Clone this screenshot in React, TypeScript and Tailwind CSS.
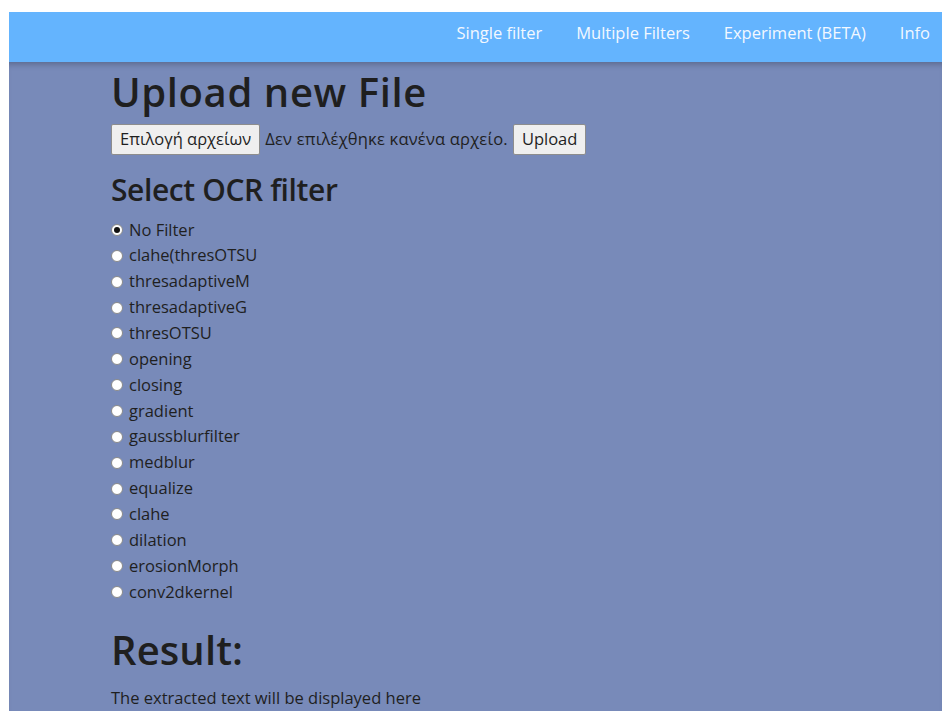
import { useState } from "react";

const filters = [
  "No Filter",
  "clahe(thresOTSU",
  "thresadaptiveM",
  "thresadaptiveG",
  "thresOTSU",
  "opening",
  "closing",
  "gradient",
  "gaussblurfilter",
  "medblur",
  "equalize",
  "clahe",
  "dilation",
  "erosionMorph",
  "conv2dkernel",
];

const links = ["Single filter", "Multiple Filters", "Experiment (BETA)", "Info"];

export default function App() {
  const [filter, setFilter] = useState("No Filter");

  return (
    <div className="min-h-screen bg-white pt-[12px] pl-[9px] font-['Open_Sans',sans-serif] text-[#1f1f1f]">
      <nav className="h-[50px] bg-[#64b4fe] flex items-center justify-end gap-[34px] pr-[12px] pb-[7px] relative z-10">
        {links.map((l) => (
          <a key={l} href="#" className="text-[16.5px] text-[#f3f8ff]">
            {l}
          </a>
        ))}
      </nav>

      <main className="bg-[#788ab9] min-h-[649px] pl-[102px] pt-[2px] shadow-[inset_0_6px_6px_-4px_rgba(0,0,0,0.25)]">
        <h1 className="text-[40px] font-semibold leading-[56px] tracking-[0.6px]">Upload new File</h1>

        <form className="flex items-center gap-[5px] mt-[4px]" onSubmit={(e) => e.preventDefault()}>
          <label className="flex items-center gap-[5px] text-[16.5px]">
            <span className="h-[31px] px-[8px] flex items-center bg-[#efefef] border border-[#8d8d8d] rounded-[2px]">
              Επιλογή αρχείων
            </span>
            <span className="tracking-[0.2px]">Δεν επιλέχθηκε κανένα αρχείο.</span>
            <input type="file" className="hidden" />
          </label>
          <button className="h-[31px] px-[8px] bg-[#efefef] border border-[#8d8d8d] rounded-[2px] text-[16.5px]">
            Upload
          </button>
        </form>

        <h2 className="text-[30px] font-semibold leading-[38px] mt-[16px] mb-[8px] tracking-[-0.4px]">Select OCR filter</h2>

        <div className="flex flex-col">
          {filters.map((f) => (
            <label key={f} className="flex items-center gap-[6px] h-[25.86px] text-[16.5px] cursor-pointer">
              <input
                type="radio"
                name="filter"
                checked={filter === f}
                onChange={() => setFilter(f)}
                className="hidden"
              />
              <span className="w-[12px] h-[12px] rounded-full bg-white border border-[#8a8a8a] flex items-center justify-center">
                {filter === f && <span className="w-[6px] h-[6px] rounded-full bg-[#111]" />}
              </span>
              {f}
            </label>
          ))}
        </div>

        <h1 className="text-[40px] font-semibold leading-[48px] mt-[21px] mb-[12px] tracking-[0.1px]">Result:</h1>
        <p className="text-[16.5px]">The extracted text will be displayed here</p>
      </main>
    </div>
  );
}
